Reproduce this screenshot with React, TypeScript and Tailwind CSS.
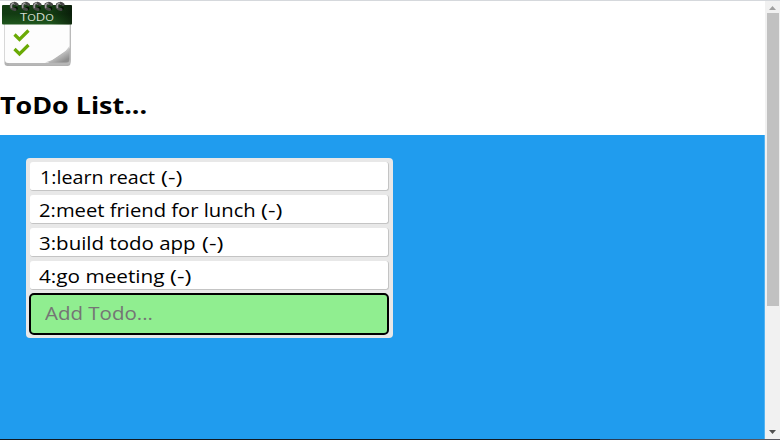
import React from "react";

type Todo = { id: number; text: string; fit: string; gap: string };

const todos: Todo[] = [
  { id: 1, text: "learn react", fit: "w-[131px]", gap: "ml-[10px] scale-x-[1.125]" },
  { id: 2, text: "meet friend for lunch", fit: "w-[231px]", gap: "ml-[9px] scale-x-[1.155]" },
  { id: 3, text: "build todo app", fit: "w-[172px]", gap: "ml-[9px] scale-x-[1.17]" },
  { id: 4, text: "go meeting", fit: "w-[140px]", gap: "ml-[9px] scale-x-[1.185]" },
];

function Logo() {
  return (
    <svg width="76" height="70" viewBox="0 0 76 70" className="block">
      <defs>
        <linearGradient id="band" x1="0" y1="0" x2="0" y2="1">
          <stop offset="0" stopColor="#143d14" />
          <stop offset="0.45" stopColor="#123b12" />
          <stop offset="1" stopColor="#1f571d" />
        </linearGradient>
        <linearGradient id="edge" x1="0" y1="0" x2="1" y2="0">
          <stop offset="0" stopColor="#000" stopOpacity="0" />
          <stop offset="0.7" stopColor="#000" stopOpacity="0" />
          <stop offset="1" stopColor="#000" stopOpacity="0.5" />
        </linearGradient>
        <linearGradient id="curl" x1="0.2" y1="0.2" x2="0.8" y2="0.9">
          <stop offset="0.2" stopColor="#f4f4f4" />
          <stop offset="0.65" stopColor="#b5b5b5" />
          <stop offset="1" stopColor="#8f8f8f" />
        </linearGradient>
      </defs>
      <path d="M4.5 22h66v41q0 3-3 3h-60q-3 0-3-3z" fill="#b2b2b2" />
      <path d="M5 22h65v26L48 63H8q-3 0-3-3z" fill="#fdfdfd" />
      <path d="M69.5 46Q62 58 45 62.500H66q3.500 0 3.500-3.500z" fill="url(#curl)" />
      <path d="M70.300 25v35q0 4-4 4H9" fill="none" stroke="#b9b9b9" strokeWidth="1.300" />
      <rect x="2" y="5" width="70" height="19.500" rx="1" fill="url(#band)" />
      <rect x="2" y="5" width="70" height="19.500" rx="1" fill="url(#edge)" />
      {[13.500, 25, 36.500, 48, 59.500].map((x) => (
        <g key={x} fill="none" strokeLinecap="round">
          <circle cx={x + 2.500} cy="8.500" r="1.800" fill="#051005" />
          <path
            d={`M${x + 3.500} 4.500Q${x + 1} 2 ${x - 2} 4.500Q${x - 3.500} 9 ${x + 1.500} 9.500`}
            stroke="#484848"
            strokeWidth="3"
          />
          <path
            d={`M${x} 3.200Q${x - 3} 4 ${x - 2.200} 7.500`}
            stroke="#a5a5a5"
            strokeWidth="1.300"
          />
        </g>
      ))}
      <text
        x="20"
        y="20.700"
        textLength="34"
        lengthAdjust="spacingAndGlyphs"
        fill="#d5ddd2"
        className="font-['Open_Sans',sans-serif] text-[10px]"
      >
        T<tspan fontSize="8.500">O</tspan>D<tspan fontSize="8.500">O</tspan>
      </text>
      <path d="M14.500 34.500l5 5 9-9M14.500 49l5 5 9-9" fill="none" stroke="#6aaa05" strokeWidth="3.200" />
    </svg>
  );
}

export default function App() {
  return (
    <div className="flex h-[440px] w-[780px] flex-col overflow-hidden bg-white font-['Open_Sans','Noto_Sans',sans-serif] text-black">
      <div className="h-px shrink-0 bg-[#d5d8dc]" />
      <div className="flex min-h-0 flex-1">
        <div className="flex w-[765px] shrink-0 flex-col">
          <header className="-mt-px h-[135px] shrink-0">
            <Logo />
            <h1 className="mt-[18px] w-max origin-left scale-x-[1.12] text-[24px] leading-[34px] font-bold">
              ToDo List...
            </h1>
          </header>
          <main className="flex-1 border-r border-[#55b4f2] bg-[#209cee] pt-[23px] pl-[26px]">
            <div className="flex h-[180px] w-[367px] flex-col rounded-[4px] bg-[#e8e8e8] pt-[4px] pl-[4px]">
              {todos.map((t) => (
                <div
                  key={t.id}
                  className="mb-[4px] flex h-[29px] w-[359px] shrink-0 items-center rounded-[3px] border-r border-b border-[#c4c4c4] bg-white pt-[2px] text-[17.5px] leading-[26px] whitespace-pre"
                >
                  <div className={"shrink-0 " + t.fit}>
                    <span className={"block w-max origin-left " + t.gap}>
                      {t.id}:{t.text}
                    </span>
                  </div>
                  <span className="block origin-left scale-x-[1.34]">(-)</span>
                </div>
              ))}
              <div className="-mt-px -ml-px flex h-[42px] w-[360px] items-center rounded-[5px] border-2 border-black bg-[#90ee90] pb-[2px]">
                <span className="ml-[14px] w-max origin-left scale-x-[1.17] text-[17.5px] text-[#757575]">Add Todo...</span>
              </div>
            </div>
          </main>
        </div>
        <aside className="flex w-[15px] flex-col items-center justify-between bg-[#f1f1f1]">
          <div className="flex flex-col items-center">
            <svg width="7" height="4" viewBox="0 0 7 4" className="mt-[5px] mb-[3px] block">
              <path d="M0 4L3.500 0L7 4z" fill="#a0a0a0" />
            </svg>
            <div className="h-[293px] w-[12px] bg-[#c1c1c1]" />
          </div>
          <svg width="7" height="4" viewBox="0 0 7 4" className="mb-[5px] block">
            <path d="M0 0L3.500 4L7 0z" fill="#505050" />
          </svg>
        </aside>
      </div>
      <div className="flex h-px shrink-0">
        <div className="w-[600px] bg-[#101820]" />
        <div className="flex-1 bg-gradient-to-r from-[#243a55] to-[#5d5a60]" />
      </div>
    </div>
  );
}
